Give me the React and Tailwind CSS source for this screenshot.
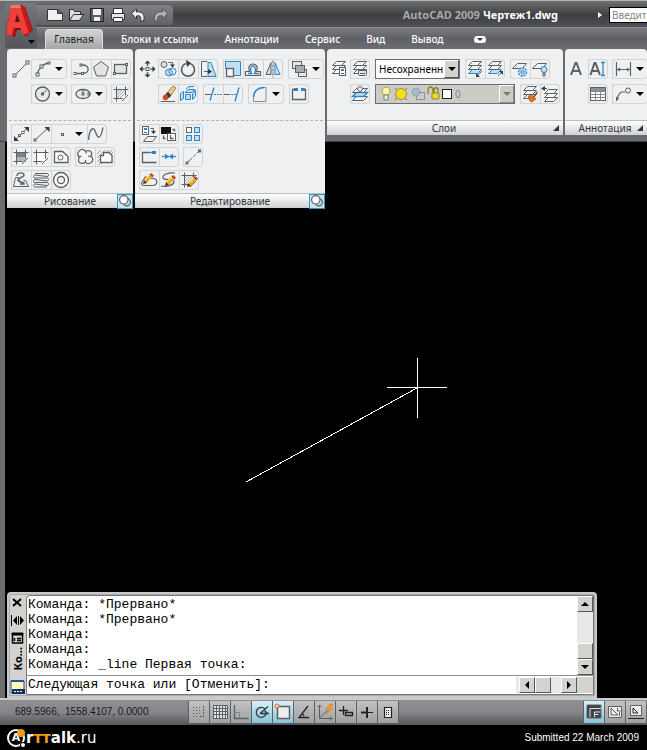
import React from 'react';
import clsx from 'clsx';

const INK = '#5a6063';
const BLUE = '#2b86c9';
const PALE = '#bfe0f3';

const Svg = ({ children, className = 'size-5' }) => (
  <svg viewBox="0 0 20 20" className={clsx('shrink-0', className)} fill="none" stroke={INK} aria-hidden="true">
    {children}
  </svg>
);

// small square grip, centred on x / y
const Grip = ({ x, y, s = 3 }) => (
  <rect x={x - s / 2} y={y - s / 2} width={s} height={s} fill="#f4f5f5" stroke={INK} />
);

const Frame = ({ fill = 'none' }) => (
  <>
    <rect x="5.5" y="5.5" width="9" height="9" fill={fill} stroke="none" />
    <path d="M2.5 5.5h15M2.5 14.5h9M5.5 2.5v15M14.5 2.5v9M17 11l-6 6" />
  </>
);

const Layers = ({ x = 0, y = 0, last = INK, fill = '#fff' }) => (
  <g transform={`translate(${x} ${y})`}>
    <path d="M3.5 13.5l4-4h9l-4 4z" stroke={last} fill={fill} />
    <path d="M3.5 9.5l4-4h9l-4 4z" fill="#f2f3f3" />
    <path d="M3.5 5.5l4-4h9l-4 4z" fill="#f2f3f3" />
  </g>
);

// tip at the lower left, eraser at the upper right
const Pencil = ({ x = 0, y = 0 }) => (
  <g transform={`translate(${x} ${y})`} stroke="none">
    <path d="M1 6l6-6 3 2-6 7z" fill="#f2a51f" />
    <path d="M1 6l6-6 1 .8-6 6z" fill="#ffd766" />
    <path d="M6.5 .5L8 -1l3 2.5-1.5 2z" fill="#b0492c" />
    <path d="M0 10l1-4 3 3z" fill="#4a3018" />
  </g>
);

const icons = {
  line: (
    <>
      <path d="M4 16L16 4" />
      <Grip x={3.5} y={16.5} />
      <Grip x={16.5} y={3.5} />
    </>
  ),
  arc: (
    <>
      <path d="M6.5 16C7 10 11 5 18 4" strokeWidth="1.3" />
      <Grip x={6.5} y={15.5} />
      <Grip x={10.5} y={7.5} />
      <Grip x={18} y={4} s={2} />
    </>
  ),
  polyline: (
    <>
      <path d="M4 14.5h7.5c7.5 0 7.5-8.5 0-8.5H9" strokeWidth="1.3" />
      <Grip x={4} y={14.5} s={2} />
      <Grip x={11.5} y={14.5} s={2} />
      <Grip x={10} y={6} s={2} />
    </>
  ),
  polygon: <path d="M10 2.5l7.5 5.5-3 9h-9l-3-9z" fill="#e2e4e4" />,
  rect: (
    <>
      <rect x="3.5" y="5.5" width="12" height="9" fill="#e2e4e4" strokeWidth="1.3" />
      <Grip x={3.5} y={14.5} s={2} />
      <Grip x={15.5} y={5.5} s={2} />
    </>
  ),
  circle: (
    <>
      <circle cx="11.5" cy="10" r="7" fill="#e6e8e8" strokeWidth="1.3" />
      <path d="M11.5 10l4-4" />
      <Grip x={11.5} y={10} s={2} />
    </>
  ),
  ellipse: (
    <>
      <ellipse cx="12" cy="10" rx="7" ry="4.5" fill="#e6e8e8" strokeWidth="1.3" />
      <path d="M12 5v5" />
      <Grip x={12} y={10} s={2} />
      <Grip x={18} y={10} s={2} />
    </>
  ),
  hatch: (
    <>
      <Frame />
      <path d="M6 8l2-2M6 11l5-5M6 14l8-8M9 14l5-5" stroke="#8f9aa1" strokeWidth="0.8" />
    </>
  ),
  xline: (
    <>
      <path d="M4 16L17 3.5" />
      <path d="M3 17v-5l5 5zM18 3v5l-5-5z" fill="#33383a" stroke="none" />
      <Grip x={8.5} y={11.5} s={2} />
      <Grip x={12} y={8.5} s={2} />
    </>
  ),
  ray: (
    <>
      <path d="M4 16L17 4" />
      <path d="M18.5 3v5l-5-5z" fill="#33383a" stroke="none" />
      <Grip x={4} y={16} s={2} />
    </>
  ),
  point: <Grip x={11.5} y={10.5} s={2} />,
  spline: <path d="M1.5 16c1-12 5-14 7-8s5 9 7.500-4.5" strokeWidth="1.3" />,
  gradient: (
    <>
      <rect x="5" y="5" width="10" height="5" fill="#7d8284" stroke="none" />
      <rect x="5" y="10" width="10" height="5" fill="#b3b8b9" stroke="none" />
      <Frame />
    </>
  ),
  boundary: <Frame fill="#fff" />,
  region: (
    <>
      <path d="M3.5 15.5v-11h8l5.5 5v6z" fill="#f9fafa" strokeWidth="1.3" />
      <circle cx="9.5" cy="10.5" r="2.5" fill="#fff" />
    </>
  ),
  cloud: (
    <path
      d="M6.5 2.5a4 4 0 0 1 4 2 4 4 0 0 1 6 1c1 2 0 3-1 4 3 1 3 5 0 6.5-2 1-4 1-5-1-2 2-6 2-7-1 0-2 0-3 1-4-3-2-2-6 2-7.5zM10.5 4.5l1 2M15.5 9.5l-2.5-.5M10.5 15v-2M4.5 10l2-1"
      fill="#f4f5f5"
      strokeWidth="1.2"
    />
  ),
  wipeout: (
    <>
      <path d="M2 7l4-4M2 11L10 3M2 15L14 3M6 17l12-12M3 18l3-3M17 3l-2 2M18 8l-2 2" stroke="#a3a7a9" />
      <path d="M5.5 15.5v-7h3v-3h5.5l3 3v7z" fill="#fff" strokeWidth="1.3" />
    </>
  ),
  solid: (
    <>
      <path d="M2.5 16.5l2-9h3M17.5 16.5l-3-6h-2M2.5 16.5h15" />
      <path d="M6 6c0-4 7-4 7-1s-6 2-6 5 6 1 6 4h-4" strokeWidth="1.4" />
      <path d="M7.5 8.5l2 4h4" />
    </>
  ),
  helix: (
    <path d="M4 3.500h12c2 0 2 3 0 3L4 5c-2 0-2 3 0 3h12c2 0 2 3 0 3L4 9.500c-2 0-2 3 0 3h12c2 0 2 3 0 3L4 14c-2 0-2 3 0 3h12" />
  ),
  donut: (
    <>
      <circle cx="10" cy="10" r="7.5" fill="#fafafa" strokeWidth="1.3" />
      <circle cx="10" cy="10" r="3.5" strokeWidth="1.3" />
    </>
  ),
  move: (
    <>
      <path d="M9.5 3v4M9.5 13v4M2.5 10h4M12.5 10h4" strokeWidth="1.5" />
      <path d="M9.5 1.5l3 3h-6zM9.5 18.5l3-3h-6zM1.5 10l3-3v6zM17.5 10l-3-3v6z" fill="#33383a" stroke="none" />
      <Grip x={9.5} y={10} />
    </>
  ),
  copy: (
    <>
      <circle cx="6" cy="5.5" r="3" fill="#ddd" />
      <circle cx="11" cy="13.5" r="3.5" stroke={BLUE} fill={PALE} />
      <circle cx="14.5" cy="12.5" r="3.5" stroke={BLUE} />
      <path d="M10.5 3.5h4v3" />
      <path d="M12 5.5h5l-2.5 3z" fill="#33383a" stroke="none" />
    </>
  ),
  rotate: (
    <>
      <path d="M8 4.5a6.5 6.5 0 1 0 4 0" strokeWidth="1.7" />
      <path d="M8 1l5 3-4 4z" fill="#33383a" stroke="none" />
    </>
  ),
  stretch: (
    <>
      <path d="M10 3.5h3l5 14h-8z" fill={PALE} stroke={BLUE} />
      <path d="M9.5 2.5h-6v15h6" />
      <path d="M6 12.5h5" />
      <path d="M10 10l4 2.5-4 2.5z" fill="#33383a" stroke="none" />
    </>
  ),
  scale: (
    <>
      <path d="M2.5 9.5v-7h15v14h-7v-7z" fill={PALE} stroke={BLUE} />
      <rect x="3.5" y="9.5" width="7" height="8" fill="#f4f4f4" strokeWidth="1.3" />
    </>
  ),
  offset: (
    <>
      <path d="M2.5 16.5v-4h4c-4-10 11-10 7 0h4v4z" strokeWidth="1.2" />
      <path d="M5 14.5h3.5c-4-10 7-10 3 0H16" stroke={BLUE} strokeWidth="1.4" />
    </>
  ),
  mirror: (
    <>
      <path d="M8 3.5v12H3z" fill="#d9dbdc" />
      <path d="M12 3.5v12h5z" fill={PALE} stroke={BLUE} />
      <path d="M10 1.5v17" strokeDasharray="3 1" />
    </>
  ),
  order: (
    <>
      <rect x="4.5" y="2.5" width="9" height="7" fill="#e8e8e8" />
      <rect x="10.5" y="10.5" width="8" height="7" fill="#e8e8e8" />
      <rect x="7.5" y="6.5" width="9" height="7" fill="#a6abad" />
    </>
  ),
  erase: (
    <>
      <path d="M3 17.5h14" />
      <path d="M7 11l8-9 3 2-7 10z" fill="#f0ca83" stroke="#8a6a3d" strokeWidth="0.8" />
      <path d="M8 10l2-2 3 3-2 3z" fill="#333" stroke="none" />
      <circle cx="7.5" cy="13.5" r="2.8" fill="#c8501e" stroke="none" />
    </>
  ),
  explode: (
    <g stroke={BLUE} fill={PALE}>
      <path d="M7 8.5l3-3h7l-3 3zM2.5 9.5l3-2v7l-3 2zM7.5 10.5h5v5h-5zM14.5 9.5l3-3v6l-3 3zM8 5l3-2.5h5" />
    </g>
  ),
  trim: (
    <>
      <path d="M2 10.5h6" />
      <path d="M11 10.5h8" stroke={BLUE} strokeDasharray="2 1" />
      <path d="M7 16.5l4-13" stroke={BLUE} strokeWidth="1.3" />
    </>
  ),
  extend: (
    <>
      <path d="M1 10.5h6" />
      <path d="M8 10.5h5" stroke={BLUE} strokeDasharray="2 1" />
      <path d="M12 17.5l4-14" stroke={BLUE} strokeWidth="1.3" />
    </>
  ),
  fillet: (
    <>
      <path d="M5.5 17.5v-4M16 3.5h2v14h-13" stroke="#8b9092" />
      <path d="M5.5 13.5c0-6 4-10 10.500-10" stroke={BLUE} strokeWidth="1.5" />
    </>
  ),
  breakAt: (
    <>
      <path d="M6 5.5H3.5v10h13v-10H14" strokeWidth="1.3" />
      <path d="M5 4h4v3H5zM12 4h4v3h-4z" fill={BLUE} stroke="none" />
    </>
  ),
  setBylayer: (
    <>
      <rect x="3.5" y="2.5" width="6" height="8" fill="#fff" />
      <rect x="5" y="4" width="3" height="2" fill={BLUE} stroke="none" />
      <path d="M5 8.5h3M4.5 17.5l4-5h9l-4 5zM11.5 4.5h3v3" />
      <path d="M12 7h5l-2.5 3z" fill="#33383a" stroke="none" />
    </>
  ),
  changeSpace: (
    <>
      <rect x="2" y="3" width="10" height="7" fill="#111" stroke="none" />
      <rect x="8.5" y="9.5" width="8" height="7" fill="#fff" />
      <path d="M11.5 11v3.5h3M4.5 11.5v3h2M13.5 5.5h2v2" strokeWidth="1.3" />
    </>
  ),
  array: (
    <>
      <rect x="3.5" y="3.5" width="5" height="5" fill="#fff" />
      <g stroke={BLUE} fill={PALE}>
        <rect x="11.5" y="3.5" width="5" height="5" />
        <rect x="3.5" y="11.5" width="5" height="5" />
        <rect x="11.5" y="11.5" width="5" height="5" />
      </g>
    </>
  ),
  lengthen: (
    <>
      <path d="M10 5.5H3.5v10h14" strokeWidth="1.3" />
      <path d="M9 5.5h7" stroke={BLUE} strokeWidth="1.3" />
      <rect x="13" y="4" width="4" height="3" fill={BLUE} stroke="none" />
    </>
  ),
  join: (
    <>
      <path d="M3 9.5h14" stroke={BLUE} strokeWidth="1.3" />
      <path d="M6 6.5l4 3-4 3zM14 6.5l-4 3 4 3z" fill={BLUE} stroke="none" />
    </>
  ),
  reverse: (
    <>
      <path d="M4 16L16 4" strokeDasharray="3 1.5" stroke={BLUE} />
      <path d="M4 16l4-4" />
      <Grip x={4} y={16} s={2} />
      <Grip x={16.5} y={4} s={2} />
    </>
  ),
  editPline: (
    <>
      <path d="M7 6l-4 6c-1 2 0 3.5 2 3.500h9c5-1 5-7 0-7h-2" strokeWidth="1.2" />
      <Pencil x={4} y={4} />
    </>
  ),
  editSpline: (
    <>
      <path d="M16 3C9 2 3 5 4 8s12 0 11 4-9 5-13 4" strokeWidth="1.2" />
      <Pencil x={6} y={6} />
    </>
  ),
  editHatch: (
    <>
      <Frame />
      <path d="M6 8l2-2M6 11l5-5M6 14l8-8" stroke="#8f9aa1" strokeWidth="0.8" />
      <Pencil x={8} y={7} />
    </>
  ),
  layerProps: (
    <>
      <Layers x={-1} y={1} />
      <rect x="9.5" y="8.5" width="6" height="8" fill="#fff" />
      <rect x="11" y="10" width="3" height="2" fill={BLUE} stroke="none" />
      <path d="M11 14.5h3" />
    </>
  ),
  layerState: (
    <>
      <Layers y={1} />
      <rect x="8.5" y="10.5" width="8" height="6" rx="1" fill="#e1e3e4" />
      <path d="M8.5 11.5h8M10 14.5h5" />
    </>
  ),
  isolate: (
    <>
      <Layers y={1} last={BLUE} fill={PALE} />
      <path d="M17 12l-4 4" />
      <path d="M11 18v-4l4 4z" fill="#33383a" stroke="none" />
    </>
  ),
  unisolate: (
    <>
      <Layers y={1} last={BLUE} fill={PALE} />
      <path d="M13 17l3-3" />
      <path d="M18 12v4l-4-4z" fill="#33383a" stroke="none" />
    </>
  ),
  freeze: (
    <>
      <path d="M2.5 9.5l5-5h9l-4 5z" />
      <circle cx="12.5" cy="13" r="4" fill={PALE} stroke={BLUE} strokeDasharray="2 1" strokeWidth="1.3" />
      <circle cx="12.5" cy="13" r="1.5" stroke={BLUE} />
    </>
  ),
  layerOff: (
    <>
      <path d="M2.5 9.5l5-5h9l-4 5z" />
      <circle cx="14" cy="10.5" r="3" fill={PALE} stroke={BLUE} />
      <path d="M13 14v3h2v-3z" fill="#ddd" />
    </>
  ),
  makeCurrent: (
    <>
      <path d="M2.5 16.5l4-4h11l-4 4z" fill="#fff" />
      <path d="M2.5 12.5l4-4h11l-4 4z" fill={PALE} stroke={BLUE} strokeWidth="1.4" />
      <path d="M2.5 8.5l4-4h11l-4 4z" fill="#fff" />
      <circle cx="10" cy="5" r="2.5" fill="#eee" />
    </>
  ),
  match: (
    <>
      <Layers y={1} />
      <path d="M17.5 8l-4 5" stroke="#8a5a2a" strokeWidth="1.5" />
      <path d="M8 12l4-1 4 4-4 3c-2 0-3-2-4-6z" fill="#d9742b" stroke="#9b4c15" strokeWidth="0.6" />
    </>
  ),
  previous: (
    <>
      <Layers x={1} y={4} />
      <path d="M2 4.5h5" />
      <path d="M5 2v5l-4-2.5z" fill="#33383a" stroke="none" />
    </>
  ),
  text: <path d="M3 16L7.5 4h1L13 16M5 12h6" strokeWidth="2" />,
  textEdit: (
    <>
      <path d="M2.5 16L6.5 4h1l4.5 12M4.5 12h6" strokeWidth="2" />
      <path d="M13 3.5h4M13 16.5h4M15 3.5v13" stroke={BLUE} strokeWidth="1.3" />
    </>
  ),
  dimension: (
    <>
      <path d="M4.5 3v14M18.5 3v14M5 10.5h13" strokeWidth="1.2" />
      <path d="M5 10.5l3-2v4zM18 10.5l-3-2v4z" fill={INK} stroke="none" />
    </>
  ),
  table: (
    <>
      <rect x="2.5" y="3.5" width="15" height="13" fill="#fff" />
      <rect x="3" y="4" width="14" height="3" fill="#8b9092" stroke="none" />
      <path d="M2.5 7.5h15M2.5 10.5h15M2.5 13.5h15M7.5 7v10M12.5 7v10" stroke="#80868a" />
    </>
  ),
  leader: (
    <>
      <path d="M5 16c1-4 2-8 5-8h3" strokeWidth="1.2" />
      <path d="M4 17.5v-5l3 2z" fill={INK} stroke="none" />
      <circle cx="16" cy="6.5" r="2.5" />
    </>
  ),
};

const Arrow = ({ className = 'border-x-4 border-t-4 border-t-black' }) => (
  <span className={clsx('block h-0 w-0 border-x-transparent', className)} />
);

const Tool = ({ name }) => (
  <button type="button" aria-label={name} className="block h-5 w-5">
    <Svg>{icons[name]}</Svg>
  </button>
);

// Bordered run of tools; "v" stands for the flyout arrow
const Group = ({ items }) => (
  <div className="flex h-5 shrink-0 rounded-sm shadow-[inset_0_0_0_1px_#d3d5d5]">
    {items.map((name, i) =>
      name === 'v' ? (
        <button key={i} type="button" aria-label="more" className="flex h-5 w-4 items-center justify-center">
          <Arrow />
        </button>
      ) : (
        <div key={i} className="shadow-[inset_1px_0_0_#d3d5d5]">
          <Tool name={name} />
        </div>
      )
    )}
  </div>
);

const Row = ({ children, className }) => <div className={clsx('flex h-5', className)}>{children}</div>;

const PanelTitle = ({ title, pinned }) => (
  <div className="flex h-[15px] items-center border-t border-[#b5bfbc] bg-linear-to-b from-white to-[#cfd1d2]">
    <span className={clsx('flex-1 text-center leading-3', pinned ? 'pl-4' : 'pl-2')}>{title}</span>
    {pinned ? (
      <button type="button" aria-label="pin" className="flex h-[15px] w-4 items-center justify-center border border-[#3c93b5] bg-[#c1e7f5]">
        <Svg className="size-3">
          <circle cx="13" cy="12" r="6" strokeWidth="2" fill="#d8d8d8" />
          <circle cx="8" cy="8" r="7" strokeWidth="2" fill="#fff" />
        </Svg>
      </button>
    ) : (
      <button type="button" aria-label="options" className="mr-1">
        <svg viewBox="0 0 6 6" className="size-[6px]">
          <path d="M6 0v6H0z" fill="#33383a" />
        </svg>
      </button>
    )}
  </div>
);

const Panel = ({ title, rows, drawer, className }) => (
  <section className={clsx('relative bg-[#eff0f1]', drawer ? 'rounded-t' : 'overflow-hidden rounded-t', className)}>
    <div className="flex h-[71px] flex-col gap-[5px] pt-[10px]">{rows}</div>
    {drawer ? (
      <div className="absolute inset-x-0 z-10 bg-[#eff0f1]">
        <div className="mx-0.5 mb-[3px] border-t border-dashed border-[#b5b890]" />
        <div className="flex flex-col gap-[3px] pb-[3px] pl-1">{drawer}</div>
        <PanelTitle title={title} pinned />
      </div>
    ) : (
      <PanelTitle title={title} />
    )}
  </section>
);

const Ribbon = () => (
  <div className="flex gap-[2px] border-b border-[#3e4043] bg-[#696b6f] pb-[6px] pl-[7px]">
    <Panel
      title="Рисование"
      className="w-[126px] shrink-0"
      rows={
        <>
          <Row className="gap-1 pl-1">
            <div className="flex">
              <Tool name="line" />
              <Group items={['arc', 'v']} />
            </div>
            <Group items={['polyline', 'polygon', 'rect']} />
          </Row>
          <Row className="gap-1 pl-6">
            <Group items={['circle', 'v']} />
            <Group items={['ellipse', 'v']} />
            <Group items={['hatch']} />
          </Row>
        </>
      }
      drawer={
        <>
          <Row>
            <Group items={['xline', 'ray', 'point', 'v', 'spline']} />
          </Row>
          <Row className="gap-1">
            <Group items={['gradient', 'boundary', 'region']} />
            <Group items={['cloud', 'wipeout']} />
          </Row>
          <Row>
            <Group items={['solid', 'helix', 'donut']} />
          </Row>
        </>
      }
    />
    <Panel
      title="Редактирование"
      className="w-[190px] shrink-0"
      rows={
        <>
          <Row className="gap-[5px] pl-[3px]">
            <div className="flex">
              <Tool name="move" />
              <Group items={['copy', 'rotate', 'stretch']} />
            </div>
            <Group items={['scale', 'offset', 'mirror']} />
            <Group items={['order', 'v']} />
          </Row>
          <Row className="gap-[5px] pl-[23px]">
            <Group items={['erase', 'explode']} />
            <Group items={['trim', 'extend']} />
            <Group items={['fillet', 'v']} />
            <Group items={['breakAt']} />
          </Row>
        </>
      }
      drawer={
        <>
          <Row className="gap-1">
            <Group items={['setBylayer', 'changeSpace']} />
            <Group items={['array']} />
          </Row>
          <Row className="gap-1">
            <Group items={['lengthen', 'join']} />
            <Group items={['reverse']} />
          </Row>
          <Row>
            <Group items={['editPline', 'editSpline', 'editHatch']} />
          </Row>
        </>
      }
    />
    <Panel
      title="Слои"
      className="w-[236px] shrink-0"
      rows={
        <>
          <Row className="gap-[5px] pl-[3px]">
            <div className="flex">
              <Tool name="layerProps" />
              <Group items={['layerState']} />
            </div>
            <div className="relative h-5 w-[85px] border border-[#6b6d70] bg-white">
              <select aria-label="Состояние слоя" className="h-full w-full appearance-none overflow-hidden pr-4 pl-[3px] text-black outline-none">
                <option>Несохраненное состояние</option>
              </select>
              <span className="pointer-events-none absolute inset-y-0 right-0 flex w-[15px] items-center justify-center border border-t-white border-r-[#55585a] border-b-[#55585a] border-l-white bg-[#d4d2cc]">
                <Arrow />
              </span>
            </div>
            <Group items={['isolate', 'unisolate']} />
            <Group items={['freeze', 'layerOff']} />
          </Row>
          <Row className="gap-[5px] pl-[23px]">
            <Group items={['makeCurrent']} />
            <div className="relative h-5 w-[140px] border border-[#6b6d70] bg-[#cccbc6]">
              <select aria-label="Слой" className="h-full w-full appearance-none pl-[79px] text-[#85878a] outline-none">
                <option>0</option>
              </select>
              <svg viewBox="0 0 76 18" className="pointer-events-none absolute top-0 left-[3px] h-[18px] w-[76px]" fill="none">
                <circle cx="7" cy="6" r="4" fill="#fdf6a8" stroke="#b8a840" />
                <path d="M5 10h4v5H5z" fill="#eee" stroke="#666" strokeWidth="0.8" />
                <path d="M16 3l2 2M28 3l-2 2M16 15l2-2M28 15l-2-2" stroke="#777" />
                <circle cx="22" cy="9" r="5.5" fill="#f4dd1c" stroke="#94934a" />
                <rect x="37.5" y="7.5" width="8" height="7" stroke="#8496a5" />
                <circle cx="37" cy="7" r="4" fill="#a6bccb" stroke="#6f93ad" strokeDasharray="2 1" />
                <path d="M49 9V5c0-4 5-4 5 0v3M55 8V5c0-3 4-3 4 0v3" stroke="#88841a" strokeWidth="1.3" />
                <rect x="53" y="8" width="7" height="6" rx="1" fill="#eedb27" stroke="#88841a" />
                <rect x="63.5" y="4.5" width="9" height="9" fill="#fff" stroke="#222" />
              </svg>
              <span className="pointer-events-none absolute inset-y-0 right-0 flex w-[15px] items-center justify-center border border-t-white border-r-[#8a8b8c] border-b-[#8a8b8c] border-l-white">
                <Arrow className="border-x-4 border-t-4 border-t-[#77787a]" />
              </span>
            </div>
            <Group items={['match', 'previous']} />
          </Row>
        </>
      }
    />
    <Panel
      title="Аннотация"
      className="min-w-[82px] flex-1"
      rows={
        <>
          <Row className="gap-1 pl-[3px]">
            <div className="flex">
              <Tool name="text" />
              <Group items={['textEdit']} />
            </div>
            <Group items={['dimension', 'v']} />
          </Row>
          <Row className="gap-1 pl-[23px]">
            <Group items={['table']} />
            <Group items={['leader', 'v']} />
          </Row>
        </>
      }
    />
  </div>
);

const quick = {
  Создать: <path d="M2.5 4.5h10l5 4v7h-15zM12.5 4.5v4h5" fill="#f1f1f1" stroke="#333" />,
  Открыть: <path d="M3.5 15.5v-11h4l1 2h6v3M3.5 15.5l4-6h10l-4 6z" fill="#dcdfe0" stroke="#2f2f2f" />,
  Сохранить: (
    <>
      <path d="M3.5 3.5h13v13h-13z" fill="#596069" stroke="#222" />
      <path d="M6 4h8v6H6zM7 12h6v4H7z" fill="#f2f2f2" stroke="none" />
    </>
  ),
  Печать: (
    <>
      <path d="M5.5 3.5h9v5h-9z" fill="#fff" stroke="#333" />
      <path d="M3.5 8.5h13v6h-13z" fill="#e7e7e7" stroke="#333" />
      <path d="M5.5 12.5h9v4h-9z" fill="#fff" stroke="#333" />
    </>
  ),
  Отменить: <path d="M2.5 8.5l5-4.5v3c6-1 9 3 7 9h-3c1-4 0-6-4-5v3z" fill="#f1f1f1" stroke="#333" />,
  Повторить: <path d="M17.5 8.5l-5-4.5v3c-6-1-9 3-8 9h3c-1-4 1-6 5-5v3z" fill="#b2b4b6" stroke="#555" />,
};

const Header = () => (
  <header className="flex border-t border-[#b5b6b8] bg-[#6c6d71] pt-[2px]">
    <button type="button" aria-label="AutoCAD" className="ml-[5px] h-[45px] w-8 bg-linear-to-b from-[#77787b] to-[#55565a]">
      <svg viewBox="0 0 32 45" className="h-[45px] w-8">
        <path d="M6 2h10l4 2 8 23-5 5-4 1-2-6h-5l-2 7-9-3z" fill="#a01216" />
        <path d="M6 2h9l9 28-6 2-3-7H9l-2 8-6-2z" fill="#ee3f3c" />
        <path d="M15 2l4 2 8 23-3 3z" fill="#c4181d" />
        <path d="M10 19l2-8 3 8z" fill="#6c0b0e" />
        <path d="M9 25h6l1 2h-5z" fill="#7d0c10" />
        <path d="M6 2h9l1 3H5z" fill="#f9716b" />
        <path d="M23 37h7l-3.5 4z" fill="#000" />
      </svg>
    </button>
    <div className="min-w-0 flex-1">
      <div className="flex h-6 items-center bg-linear-to-b from-[#666769] via-[#3f4042] to-[#505154]">
        <div className="flex h-5 gap-px rounded-r-sm bg-linear-to-b from-[#808185] to-[#626367] pr-[3px] pl-2">
          {Object.entries(quick).map(([label, shape]) => (
            <button key={label} type="button" aria-label={label} className="size-5">
              <Svg>{shape}</Svg>
            </button>
          ))}
        </div>
        <h1 className="ml-auto flex gap-[3px] text-[11px] font-bold whitespace-nowrap text-[#a9aaac]">
          AutoCAD 2009 <span className="text-white">Чертеж1.dwg</span>
        </h1>
        <span className="ml-10 block h-0 w-0 border-y-[3px] border-l-4 border-y-transparent border-l-white" />
        <input
          aria-label="Поиск"
          placeholder="Введите ключевое слово"
          className="ml-[7px] h-4 w-[38px] min-w-0 border border-r-0 border-black bg-white pl-0.5 placeholder:text-[#85868a]"
        />
      </div>
      <nav className="flex h-[22px] items-end border-t border-[#8f9094] bg-linear-to-b from-[#7b7c80] via-[#606166] to-[#6c6d71] pl-2 text-white">
        <a href="#home" className="flex h-5 w-[58px] items-center justify-center rounded-t border border-b-0 border-[#dcdcdc] bg-linear-to-b from-[#d4d5d5] to-[#a5a7a8] text-[#222]">
          Главная
        </a>
        <div className="flex h-5 items-center gap-[26px] pl-[18px] font-medium whitespace-nowrap">
          <a href="#blocks">Блоки и ссылки</a>
          <a href="#annotate">Аннотации</a>
          <a href="#tools">Сервис</a>
          <a href="#view">Вид</a>
          <a href="#output">Вывод</a>
          <button type="button" aria-label="свернуть" className="ml-1 flex h-[7px] w-3 items-center justify-center rounded-sm bg-white">
            <Arrow className="border-x-[3px] border-t-[3px] border-t-[#333]" />
          </button>
        </div>
      </nav>
    </div>
  </header>
);

const ScrollButton = ({ label, d }) => (
  <button
    type="button"
    aria-label={label}
    className="flex h-4 w-4 shrink-0 items-center justify-center border border-t-white border-r-[#55585a] border-b-[#55585a] border-l-white bg-[#d4d3d0]"
  >
    {d && (
      <svg viewBox="0 0 8 8" className="size-2">
        <path d={d} />
      </svg>
    )}
  </button>
);

const log = [
  'Команда: *Прервано*',
  'Команда: *Прервано*',
  'Команда:',
  'Команда:',
  'Команда: _line Первая точка:',
];

const CommandWindow = () => (
  <div className="absolute bottom-0 left-[2px] flex w-[590px] max-w-full rounded-t-sm border-2 border-[#c8c9c8] bg-[#d2d2d0] p-px text-black shadow-[inset_0_0_0_1px_#a9aaaa]">
    <div className="flex w-4 flex-col items-center pt-[2px]">
      <svg viewBox="0 0 16 50" className="h-[50px] w-4" fill="none" stroke="#000">
        <path d="M3 2l8 7M11 2l-8 7" strokeWidth="2" />
        <path d="M1.5 18v11M8.5 19v9" />
        <path d="M7 19v9l-4-4.5zM10 19v9l4-4.5z" fill="#000" stroke="none" />
        <path d="M2 36h11v2H2z" fill="#000" />
        <path d="M2.500 38v8h10v-8M7 41.500h4M7 43.500h4M4.500 41v3" strokeWidth="1.5" />
      </svg>
      <span className="-rotate-180 text-[11px] leading-4 font-bold [writing-mode:vertical-rl]">Ко...</span>
      <svg viewBox="0 0 16 16" className="mt-auto size-4">
        <path d="M1 2h13v12H1z" fill="#fff9b8" stroke="#1d4d9d" />
        <path d="M1 1h13v2H1z" fill="#27509b" />
        <path d="M2 10h13v5H2z" fill="#16305f" />
        <path d="M4 12.5h2M7 12.5h2M10 12.5h2" stroke="#fff" />
      </svg>
    </div>
    <div className="min-w-0 flex-1 rounded-tl border border-[#77797a] bg-white font-['Liberation_Mono',monospace] text-[13px]">
      <div className="flex border-b border-[#8c8d8d]">
        <div className="min-w-0 flex-1 pt-px pb-[3px] pl-px leading-[15px] whitespace-pre">
          {log.map((text, i) => (
            <div key={i}>{text}</div>
          ))}
        </div>
        <div className="flex w-4 flex-col bg-[#e9e8e6]">
          <ScrollButton label="вверх" d="M0 6h8L4 2z" />
          <div className="flex-1" />
          <ScrollButton label="ползунок" />
          <ScrollButton label="вниз" d="M0 2h8L4 6z" />
        </div>
      </div>
      <div className="flex h-[18px] items-center">
        <input aria-label="Команда" defaultValue="Следующая точка или [Отменить]:" className="min-w-0 flex-1 pl-px outline-none" />
        <div className="flex w-[77px] bg-[#e9e8e6] pl-[3px]">
          <ScrollButton label="влево" d="M6 0v8L2 4z" />
          <ScrollButton label="позиция" />
          <div className="flex-1 bg-[#e9e8e6]" />
          <ScrollButton label="вправо" d="M2 0v8l4-4z" />
          <div className="w-4 bg-[#d4d3d0]" />
        </div>
      </div>
    </div>
  </div>
);

const modes = [
  { label: 'ШАГ', d: <path d="M4 5.5h9M4 8.5h9M4 11.5h9M4 14.5h6" strokeDasharray="1 2" />, extra: <path d="M14.5 4v11M11 14.5h4" strokeDasharray="2 1" /> },
  { label: 'СЕТКА', d: <path d="M3.5 3.5h14v13h-14z" fill="#e5e5e5" />, extra: <path d="M6.5 3v14M9.5 3v14M12.5 3v14M15.5 3v14M3 6.5h14M3 9.5h14M3 12.5h14" /> },
  { label: 'ОРТО', d: <path d="M3.5 3v13.5h14" strokeWidth="1.3" />, extra: <path d="M3.5 10.5h5v6" stroke="#6d8796" /> },
  { label: 'ОТС-ПОЛЯР', on: true, d: <path d="M13 7a5 5 0 1 0 1 5M8 11.5l8-7M8 11.5h9M12 8l3 3" strokeWidth="1.3" stroke="#2d3a40" /> },
  {
    label: 'ПРИВЯЗКА',
    on: true,
    d: <path d="M4.5 4.5h12v12h-12z" fill="#eee" strokeWidth="1.5" />,
    extra: <circle cx="4" cy="4" r="2" stroke="#e0602a" fill="#ffd9bd" />,
  },
  { label: 'ОТС-ОБЪЕКТ', d: <path d="M14 4L5 15.5h10M8 11l2 3" strokeWidth="1.3" stroke="#222" /> },
  {
    label: 'ДПСК',
    d: <path d="M4.5 3v13.5h13M4.5 16l8-8M2.5 5l2-2 2 2M15 14.5l2 2-2 2" />,
    extra: <path d="M15 2l-4 5h3l-3 5 7-6h-3l3-4z" fill="#f7a21c" stroke="#c87410" strokeWidth="0.5" />,
  },
  { label: 'ДИН', d: <path d="M3 8.5h9M7.5 4v9M9.5 10.5h7v3h-7z" strokeWidth="1.3" stroke="#222" /> },
  { label: 'ВЕС', d: <path d="M4 10.5h6M10 5v11" strokeWidth="2" stroke="#222" />, extra: <path d="M10 10.5h6" stroke="#222" /> },
  { label: 'БС', d: <path d="M6.5 5.5h7v10h-7z" fill="#eee" strokeWidth="1.2" stroke="#222" />, extra: <path d="M8 8.5h4M8 10.5h4M8 12.5h4" strokeDasharray="1 1" stroke="#222" /> },
];

const spaces = [
  { label: 'МОДЕЛЬ', on: true, d: <path d="M3 3h14v13H3z" fill="#3d4346" />, extra: <path d="M6 15V6.5h11M10.5 15v-5h6M10.5 12.5h4" stroke="#dfe5e7" /> },
  { label: 'ЛИСТ', d: <path d="M3.5 4.5h13v11h-13z" fill="#eee" />, extra: <path d="M6 6v7h7zM12.5 6v3h3M14.5 10v4" /> },
  { label: 'Быстрый просмотр', d: <path d="M4.5 3.5h11v10h-11z" fill="#eee" />, extra: <path d="M7 6v5h5zM2 16.5h16" stroke="#222" /> },
];

const Mode = ({ label, on, d, extra }) => (
  <button
    type="button"
    aria-label={label}
    aria-pressed={!!on}
    className={clsx(
      'flex h-[22px] w-[21px] items-center justify-center border-r border-[#5f6063]',
      on ? 'bg-linear-to-b from-[#d8f0f8] to-[#89c3d8]' : 'bg-linear-to-b from-[#c2c2c4] to-[#a1a1a3]'
    )}
  >
    <Svg>
      {d}
      {extra}
    </Svg>
  </button>
);

const StatusBar = () => (
  <div className="flex h-[27px] items-start border-t-2 border-[#cbccc9] bg-linear-to-b from-[#8f8f93] via-[#85858a] to-[#55575a] pt-px">
    <span className="w-[188px] pl-[15px] font-['Liberation_Sans',sans-serif] leading-[22px] whitespace-pre text-[#17181a]">
      689.5966,  1558.4107, 0.0000
    </span>
    <div className="flex border-l border-[#5f6063]">
      {modes.map((m) => (
        <Mode key={m.label} {...m} />
      ))}
    </div>
    <div className="ml-auto flex border-l border-[#5f6063]">
      {spaces.map((m) => (
        <Mode key={m.label} {...m} />
      ))}
    </div>
  </div>
);

const Footer = () => (
  <footer className="flex h-[25px] items-center bg-black pr-2 pl-[7px] text-white">
    <a href="#arttalk" className="flex items-center font-['DejaVu_Sans',sans-serif] text-[15px] leading-4 font-bold">
      <span className="relative flex size-[18px] items-center justify-center rounded-full border-2 border-white text-[11px]">
        A
        <span className="absolute -top-0.5 -right-0.5 size-2 rounded-full bg-[#f39a1a]" />
        <span className="absolute -right-0.5 -bottom-0.5 size-1 rounded-full bg-white ring-1 ring-black" />
      </span>
      <span className="ml-px">r</span>
      <span className="text-[#f39a1a]">тт</span>
      <span>alk</span>
      <span className="text-[15px] font-normal">.ru</span>
    </a>
    <span className="ml-auto font-['Liberation_Sans',sans-serif]">Submitted 22 March 2009</span>
  </footer>
);

const App = () => (
  <div className="flex min-h-screen flex-col overflow-hidden bg-[#6c6d71] font-['Noto_Sans',sans-serif] text-[10px] text-[#33363a]">
    <Header />
    <Ribbon />
    <main className="relative ml-[5px] min-h-[400px] flex-1 bg-black">
      <svg className="absolute top-0 left-0 h-full w-full" fill="none" stroke="#fff" shapeRendering="crispEdges">
        <path d="M241 340L412 246M382 245.5h60M412.5 216v60" />
      </svg>
      <CommandWindow />
    </main>
    <StatusBar />
    <Footer />
  </div>
);

export default App;
